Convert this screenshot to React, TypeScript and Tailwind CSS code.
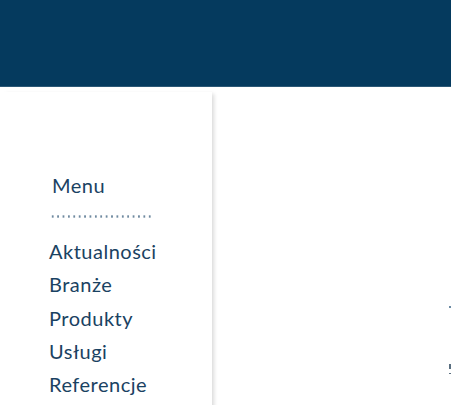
import React from "react";

const items = ["Aktualności", "Branże", "Produkty", "Usługi", "Referencje"];

export default function App() {
  return (
    <div className="w-[453px] h-[405px] overflow-hidden bg-white font-['Lato',sans-serif]">
      <div className="w-[451px] h-[87px] bg-[#053a5e] border-b border-[#2c5876]" />
      <div className="flex">
        <aside className="mt-[5px] w-[212px] h-[400px] bg-white shadow-[4px_0_4px_-2px_rgba(0,0,0,0.15)] pt-[79px]">
          <div className="pl-[52px] text-[20px] leading-[28px] tracking-[0.5px] text-[#1a4262]">Menu</div>
          <div className="ml-[50px] mt-[16px] w-[104px] h-[3px] bg-[radial-gradient(circle,#6f8aa0_1px,transparent_1.3px)] bg-[length:5.4px_3px]" />
          <ul className="mt-[17px] pl-[49px] text-[20px] tracking-[0.5px] text-[#1a4262]">
            {items.map((it) => (
              <li key={it} className="h-[33.3px] leading-[33px]">
                {it}
              </li>
            ))}
          </ul>
        </aside>
        <main className="flex-1 flex flex-col items-end pr-[2px] pt-[219px]">
          <span className="w-[2px] h-[2px] bg-[#6c8aa3]" />
          <span className="mt-[56px] w-[2px] h-[5px] bg-[#5a6f80]" />
          <span className="mt-[4px] w-[2px] h-[1px] bg-[#5a6f80]" />
        </main>
      </div>
    </div>
  );
}
